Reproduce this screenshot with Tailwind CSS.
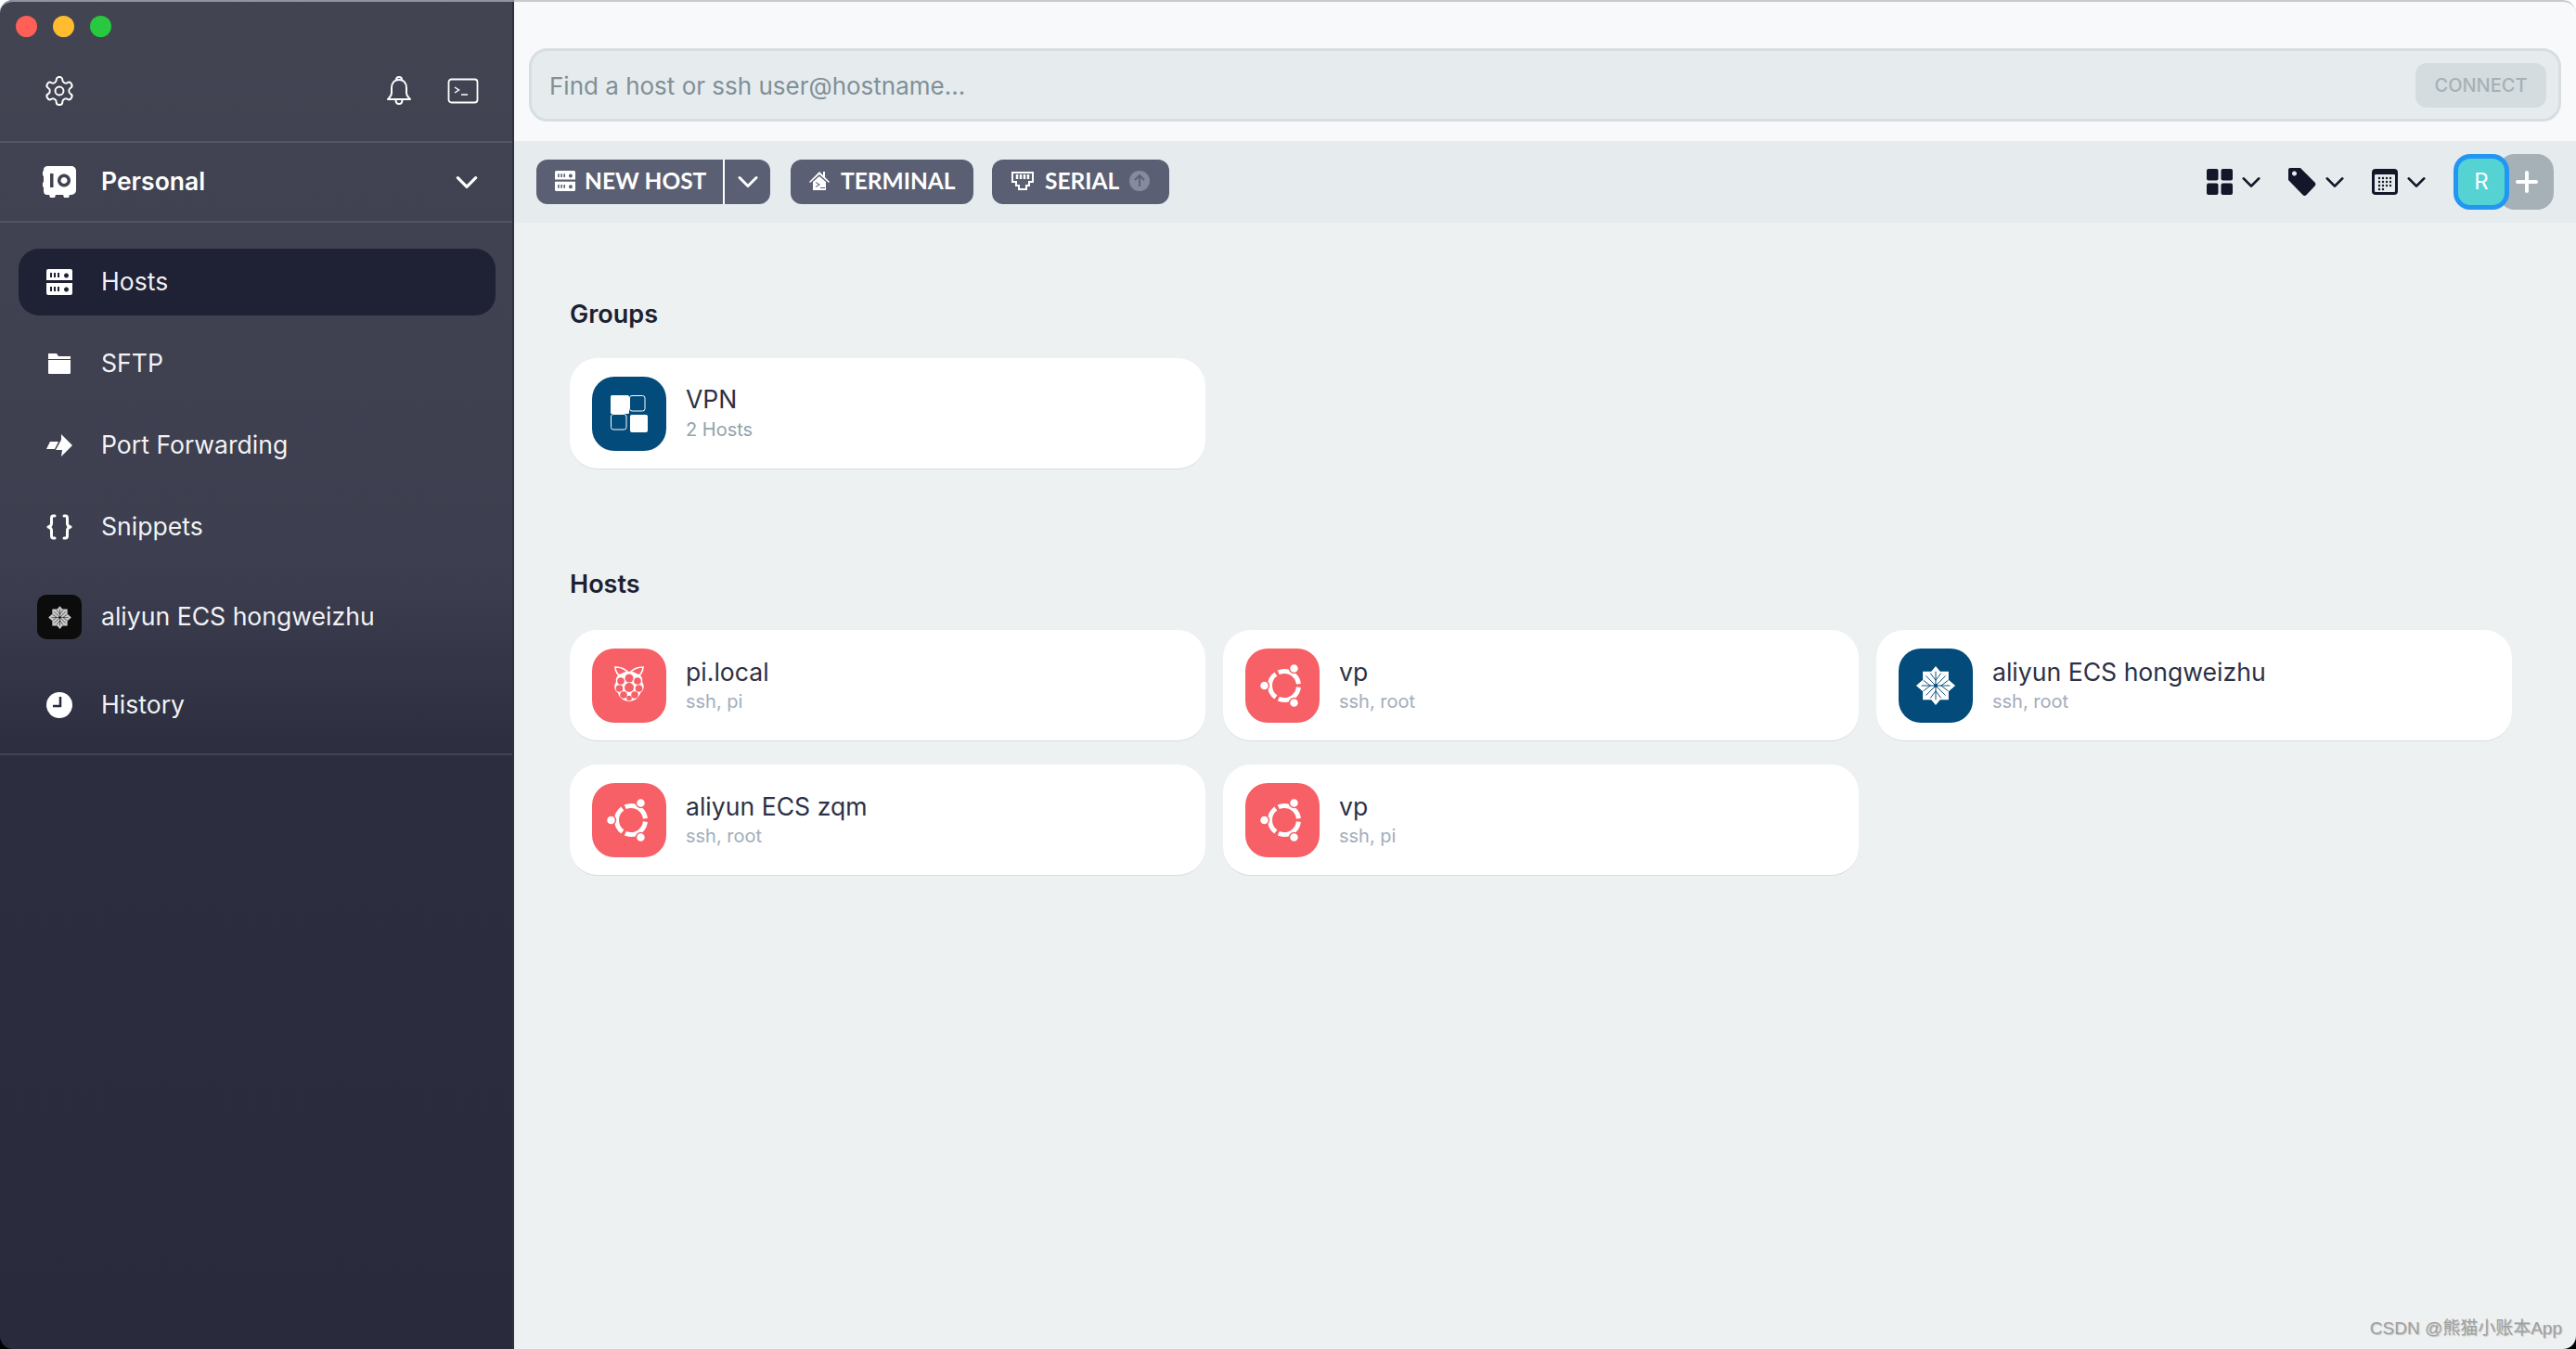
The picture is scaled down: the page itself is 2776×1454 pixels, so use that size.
<!DOCTYPE html>
<html><head><meta charset="utf-8">
<script src="https://cdn.jsdelivr.net/npm/@tailwindcss/browser@4"></script>
</head>
<body class="bg-[linear-gradient(#fff_50%,#000_50%)] h-[1454px]">
<svg class="hidden" width="0" height="0">
<symbol id="server" viewBox="0 0 28 28"><path fill="currentColor" fill-rule="evenodd" d="M2 0h24a2 2 0 0 1 2 2v10H0V2a2 2 0 0 1 2-2zM0 15h28v11a2 2 0 0 1-2 2H2a2 2 0 0 1-2-2zM4 4v5h2V4zm4 0v5h2V4zm4 0v5h2V4zm9.500 .5a2.500 2.500 0 1 0 .01 0zM4 19v5h2v-5zm4 0v5h2v-5zm4 0v5h2v-5zm9.500 .5a2.500 2.500 0 1 0 .01 0z"/></symbol>
<symbol id="chev" viewBox="0 0 22 14"><path d="M2 2.500l9 9 9-9" fill="none" stroke="currentColor" stroke-width="3" stroke-linecap="round" stroke-linejoin="round"/></symbol>
<symbol id="ubuntu" viewBox="0 0 80 80"><rect width="80" height="80" rx="24" fill="#f66066"/><circle cx="42" cy="40" r="15.500" fill="none" stroke="#fff" stroke-width="5" pathLength="100" stroke-dasharray="29.800 3.500" stroke-dashoffset="-1.750"/><g fill="#fff" stroke="#f66066" stroke-width="1.500"><circle cx="52.500" cy="21.500" r="5"/><circle cx="52.500" cy="58.500" r="5"/><circle cx="20.500" cy="40" r="5"/></g></symbol>
<symbol id="centos" viewBox="0 0 48 48" ><path fill="currentColor" d="M24 2l5 6h9.500v9.500L46 24l-7.500 6.500V40H29l-5 6-5-6H9.500v-9.500L2 24l7.500-6.500V8H19z"/><g fill="none" stroke="var(--ln)" stroke-width="1"><path d="M24 8v32M8 24h32M13 13l22 22M35 13L13 35M10 18l8 6-8 6M38 18l-8 6 8 6M18 10l6 8 6-8M18 38l6-8 6 8"/></g><circle cx="24" cy="24" r="2" fill="var(--ln)"/></symbol>
</svg>

<div class="w-[2776px] h-[1454px] flex overflow-hidden rounded-[14px] relative font-['Inter','Noto_Sans',sans-serif]">
  <aside class="w-[554px] shrink-0 flex flex-col text-white bg-[linear-gradient(180deg,#424452_0%,#3d3f50_42%,#2c2e40_56%,#292b3d_100%)] border-r-2 border-[#2f3140]">
    <div class="h-[154px] shrink-0 border-b-2 border-white/10 flex flex-col">
      <div class="flex gap-[17px] pl-[17px] pt-[17px]">
        <span class="w-[23px] h-[23px] rounded-full bg-[#fe5f57]"></span>
        <span class="w-[23px] h-[23px] rounded-full bg-[#febc2e]"></span>
        <span class="w-[23px] h-[23px] rounded-full bg-[#28c840]"></span>
      </div>
      <div class="flex items-center pl-[46px] pr-[36px] mt-[40px]">
        <svg class="w-[36px] h-[36px]" viewBox="0 0 24 24" fill="none" stroke="currentColor" stroke-width="1.300" stroke-linecap="round" stroke-linejoin="round"><path d="M12.220 2h-.44a2 2 0 0 0-2 2v.18a2 2 0 0 1-1 1.730l-.43.250a2 2 0 0 1-2 0l-.15-.080a2 2 0 0 0-2.730.730l-.22.380a2 2 0 0 0 .730 2.730l.15.100a2 2 0 0 1 1 1.720v.510a2 2 0 0 1-1 1.740l-.15.090a2 2 0 0 0-.730 2.730l.22.380a2 2 0 0 0 2.730.730l.15-.080a2 2 0 0 1 2 0l.43.250a2 2 0 0 1 1 1.730V20a2 2 0 0 0 2 2h.44a2 2 0 0 0 2-2v-.18a2 2 0 0 1 1-1.730l.43-.250a2 2 0 0 1 2 0l.15.080a2 2 0 0 0 2.730-.730l.22-.390a2 2 0 0 0-.730-2.730l-.15-.080a2 2 0 0 1-1-1.740v-.500a2 2 0 0 1 1-1.740l.15-.090a2 2 0 0 0 .730-2.730l-.22-.380a2 2 0 0 0-2.730-.730l-.15.080a2 2 0 0 1-2 0l-.43-.250a2 2 0 0 1-1-1.730V4a2 2 0 0 0-2-2z"/><circle cx="12" cy="12" r="3"/></svg>
        <svg class="ml-auto w-[28px] h-[34px]" viewBox="0 0 28 34" fill="none" stroke="currentColor" stroke-width="2" stroke-linejoin="round"><path d="M14 5c-5.500 0-8 4-8 9v5c0 3-2 5-4 7h24c-2-2-4-4-4-7v-5c0-5-2.500-9-8-9z"/><path d="M11 5c0-4 6-4 6 0M10.500 26.500c0 6 7 6 7 0"/></svg>
        <svg class="ml-[38px] w-[34px] h-[28px]" viewBox="0 0 34 28" fill="none" stroke="currentColor" stroke-width="1.800"><rect x="1.500" y="1.500" width="31" height="25" rx="3"/><path d="M8 10l4.500 3L8 16" stroke-width="1.500"/><path d="M15 18h7" stroke-width="1.500"/></svg>
      </div>
    </div>
    <div class="h-[86px] shrink-0 border-b-2 border-white/10 flex items-center pl-[46px] pr-[37px]">
      <svg class="w-[36px] h-[34px]" viewBox="0 0 36 34"><path fill="#fff" fill-rule="evenodd" d="M5 0h26a5 5 0 0 1 5 5v21a5 5 0 0 1-5 5h-2l-1 3h-5l-1-3H14l-1 3H8l-1-3H5a4 4 0 0 1-4-4v-4l-1-1v-4l1-1v-6L0 10V6l1-1a4 4 0 0 1 4-5zM8 8v15h3.500V8zm15 .5a7 7 0 1 0 .01 0zm0 3.500a3.500 3.500 0 1 1-.01 0z"/></svg>
      <span class="ml-[27px] text-[26.500px] font-semibold">Personal</span>
      <svg class="ml-auto w-[24px] h-[15px]"><use href="#chev"/></svg>
    </div>
    <nav class="flex flex-col pl-[20px] pr-[18px] pt-[28px] border-b-2 border-white/10 h-[574px] shrink-0 text-[26.600px] text-white/95">
      <a class="h-[72px] shrink-0 rounded-[22px] bg-[#1f2135] flex items-center pl-[30px] gap-[31px] mb-[8px]"><svg class="w-[28px] h-[28px] text-white"><use href="#server"/></svg>Hosts</a>
      <a class="h-[88px] shrink-0 flex items-center pl-[30px] gap-[31px]"><svg class="w-[28px] h-[28px]" viewBox="0 0 28 28" fill="#fff"><path d="M2 3h9l2 3h13v3H2zM2 10h24v14a1 1 0 0 1-1 1H3a1 1 0 0 1-1-1z"/></svg>SFTP</a>
      <a class="h-[88px] shrink-0 flex items-center pl-[30px] gap-[31px]"><svg class="w-[28px] h-[28px]" viewBox="0 0 28 28" fill="#fff"><path d="M16 2l12 12-12 12 1-7h-7l6-11zM4 10h9l-4 8H0z"/></svg>Port Forwarding</a>
      <a class="h-[88px] shrink-0 flex items-center pl-[30px] gap-[31px]"><svg class="w-[28px] h-[28px]" viewBox="0 0 28 28" fill="none" stroke="#fff" stroke-width="3" stroke-linecap="round" stroke-linejoin="round"><path d="M9 2H7.500C6 2 5.500 3 5.500 4.500V10c0 2-1 3.500-3.500 4 2.500.5 3.500 2 3.500 4v5.500C5.500 25 6 26 7.500 26H9M19 2h1.500C22 2 22.500 3 22.500 4.500V10c0 2 1 3.500 3.500 4-2.500.5-3.500 2-3.500 4v5.500c0 1.500-.5 2.500-2 2.500H19"/></svg>Snippets</a>
      <a class="h-[106px] shrink-0 flex items-center pl-[20px] gap-[21px]"><span class="w-[48px] h-[48px] rounded-[10px] bg-[#0c0c0c] flex items-center justify-center [--ln:#0c0c0c]"><svg class="w-[27px] h-[27px] text-[#c8c8c8]"><use href="#centos"/></svg></span>aliyun ECS hongweizhu</a>
      <a class="h-[84px] shrink-0 flex items-center pl-[30px] gap-[31px]"><svg class="w-[28px] h-[28px]" viewBox="0 0 28 28"><circle cx="14" cy="14" r="14" fill="#fff"/><path d="M15 5v10H7" fill="none" stroke="#292b3d" stroke-width="2.500"/></svg>History</a>
    </nav>
  </aside>

  <main class="flex-1 flex flex-col bg-[#edf1f2] text-[#2d3145]">
    <div class="h-[152px] shrink-0 bg-[#f8f9fb] pt-[52px] pl-[16px] pr-[16px]">
      <div class="h-[79px] rounded-[20px] border-[3px] border-[#d7dee2] bg-[#e6ebee] flex items-center pl-[19px] pr-[13px]">
        <span class="text-[26px] text-[#7f9097] pt-[1px]">Find a host or ssh user@hostname...</span>
        <span class="ml-auto w-[141px] h-[48px] rounded-[12px] bg-[#d5dcdf] text-[#a5b1b7] text-[20px] font-medium flex items-center justify-center">CONNECT</span>
      </div>
    </div>
    <div class="h-[88px] shrink-0 bg-[#e6ebee] flex items-center pl-[24px] pr-[24px] text-white text-[24.500px] font-bold font-['Lato',sans-serif]">
      <div class="h-[48px] w-[252px] rounded-[12px] bg-[#5b5f73] flex overflow-hidden">
        <div class="flex-1 flex items-center pl-[20px] pb-[2px] gap-[10px] border-r-2 border-white"><svg class="w-[22px] h-[22px]"><use href="#server"/></svg>NEW HOST</div>
        <div class="w-[49px] flex items-center justify-center"><svg class="w-[22px] h-[14px]"><use href="#chev"/></svg></div>
      </div>
      <div class="ml-[22px] h-[48px] w-[197px] rounded-[12px] bg-[#5b5f73] flex items-center pl-[20px] pb-[2px] gap-[12px]">
        <svg class="w-[22px] h-[22px]" viewBox="0 0 22 22" fill="#fff"><path d="M11 1l4 4V1h2v6l5 5-1 1-10-9L1 13l-1-1zM11 6l7 6v9H4v-9zM7 12v1l3 2-3 2v1l5-3zM12 18v1h5v-1z" fill-rule="evenodd"/></svg>TERMINAL
      </div>
      <div class="ml-[20px] h-[48px] w-[191px] rounded-[12px] bg-[#5b5f73] flex items-center pl-[20px] pb-[2px] gap-[11px]">
        <svg class="w-[26px] h-[22px]" viewBox="0 0 26 22" fill="none" stroke="#fff" stroke-width="2"><path d="M2 2h22v10h-4v4h-3v4H9v-4H6v-4H2z"/><path d="M7 4v5M11 4v5M15 4v5M19 4v5" stroke-width="2.500"/></svg>SERIAL
        <span class="w-[22px] h-[22px] rounded-full bg-[#858a9e] flex items-center justify-center"><svg class="w-[14px] h-[14px]" viewBox="0 0 14 14" fill="none" stroke="#5b5f73" stroke-width="1.800"><path d="M7 13V1M2 6l5-5 5 5"/></svg></span>
      </div>
      <div class="ml-auto flex items-center text-[#131729]">
        <svg class="w-[28px] h-[28px]" viewBox="0 0 28 28" fill="currentColor"><rect width="12.500" height="12.500" rx="2"/><rect x="15.500" width="12.500" height="12.500" rx="2"/><rect y="15.500" width="12.500" height="12.500" rx="2"/><rect x="15.500" y="15.500" width="12.500" height="12.500" rx="2"/></svg>
        <svg class="ml-[10px] w-[20px] h-[13px]"><use href="#chev"/></svg>
        <svg class="ml-[30px] w-[30px] h-[30px]" viewBox="0 0 30 30" fill="currentColor"><path fill-rule="evenodd" d="M2 0h11l15.500 15.500a3 3 0 0 1 0 4L19.500 29a3 3 0 0 1-4 0L0 13V2a2 2 0 0 1 2-2zm4.500 3.500a2.500 2.500 0 1 0 .01 0z"/></svg>
        <svg class="ml-[10px] w-[20px] h-[13px]"><use href="#chev"/></svg>
        <svg class="ml-[30px] w-[28px] h-[28px]" viewBox="0 0 28 28"><rect width="28" height="28" rx="4" fill="currentColor"/><rect x="3" y="6" width="22" height="19" rx="1" fill="#e6ebee"/><g fill="#131729"><circle cx="8" cy="10" r="1.200"/><circle cx="12" cy="10" r="1.200"/><circle cx="16" cy="10" r="1.200"/><circle cx="20" cy="10" r="1.200"/><circle cx="8" cy="14" r="1.200"/><circle cx="12" cy="14" r="1.200"/><circle cx="16" cy="14" r="1.200"/><circle cx="20" cy="14" r="1.200"/><circle cx="8" cy="18" r="1.200"/><circle cx="12" cy="18" r="1.200"/><circle cx="16" cy="18" r="1.200"/><circle cx="20" cy="18" r="1.200"/><circle cx="8" cy="22" r="1.200"/><circle cx="12" cy="22" r="1.200"/></g></svg>
        <svg class="ml-[10px] w-[20px] h-[13px]"><use href="#chev"/></svg>
        <div class="ml-[30px] flex items-center">
          <span class="relative z-10 w-[60px] h-[60px] rounded-[18px] border-[5px] border-[#2196f3] bg-[#55d3d3] text-white text-[24px] font-normal font-['Inter',sans-serif] flex items-center justify-center">R</span>
          <span class="w-[60px] h-[60px] -ml-[12px] pl-[12px] rounded-[18px] bg-[#a5b1b7] flex items-center justify-center"><svg class="-ml-[11px] w-[24px] h-[24px]" viewBox="0 0 24 24" stroke="#fff" stroke-width="4" stroke-linecap="round"><path d="M12 2v20M2 12h20"/></svg></span>
        </div>
      </div>
    </div>

    <div class="pl-[60px] pt-[82px] w-[2153px]">
      <h2 class="text-[27px] font-semibold text-[#1c2030] leading-[33px]">Groups</h2>
      <div class="mt-[31px] grid grid-cols-3 gap-x-[19px] gap-y-[26px]">
        <div class="h-[120px] rounded-[30px] bg-white border-b border-[#d5dde1] flex items-center pl-[24px] gap-[21px]">
          <svg class="w-[80px] h-[80px] shrink-0" viewBox="0 0 80 80"><rect width="80" height="80" rx="24" fill="#024b7a"/><rect x="20" y="20" width="20" height="20" rx="1.500" fill="#fff"/><rect x="40.500" y="20.500" width="16.500" height="16.500" rx="2.500" fill="#024b7a" stroke="#fff"/><rect x="20.500" y="40.500" width="16.500" height="16.500" rx="2.500" fill="#024b7a" stroke="#fff"/><rect x="41" y="41" width="19" height="19" rx="2" fill="#fff"/></svg>
          <div><div class="text-[26.600px] leading-[34px]">VPN</div><div class="text-[20px] leading-[32px] text-[#94a3ac]">2 Hosts</div></div>
        </div>
      </div>
      <h2 class="mt-[108px] text-[27px] font-semibold text-[#1c2030] leading-[32px]">Hosts</h2>
      <div class="mt-[33px] grid grid-cols-3 gap-x-[19px] gap-y-[25px]">
        <div class="h-[120px] rounded-[30px] bg-white border-b border-[#d5dde1] flex items-center pl-[24px] gap-[21px]">
          <svg class="w-[80px] h-[80px] shrink-0" viewBox="0 0 80 80"><rect width="80" height="80" rx="24" fill="#f66066"/><g fill="none" stroke="#fff" stroke-width="1.600"><path d="M39 26c-4-5-10-6-14-6 0 5 3 10 9 11M41 26c4-5 9-6 14-6 0 5-3 10-9 11"/></g><path fill="#fff" d="M32 27c4-3 12-3 16 0 5 1 7 5 6 9 3 4 2 9-2 12-1 5-7 9-12 9s-11-4-12-9c-4-3-5-8-2-12-1-4 1-8 6-9z"/><g fill="#f66066"><circle cx="40" cy="32" r="4.500"/><circle cx="31" cy="35" r="3.800"/><circle cx="49" cy="35" r="3.800"/><circle cx="40" cy="42" r="5"/><circle cx="29.500" cy="43" r="3.800"/><circle cx="50.500" cy="43" r="3.800"/><circle cx="34" cy="50" r="3.800"/><circle cx="46" cy="50" r="3.800"/><circle cx="40" cy="53.500" r="2.800"/></g></svg>
          <div><div class="text-[26.600px] leading-[34px]">pi.local</div><div class="text-[20px] leading-[30px] text-[#a3adbb]">ssh, pi</div></div>
        </div>
        <div class="h-[120px] rounded-[30px] bg-white border-b border-[#d5dde1] flex items-center pl-[24px] gap-[21px]">
          <svg class="w-[80px] h-[80px] shrink-0"><use href="#ubuntu"/></svg>
          <div><div class="text-[26.600px] leading-[34px]">vp</div><div class="text-[20px] leading-[30px] text-[#a3adbb]">ssh, root</div></div>
        </div>
        <div class="h-[120px] rounded-[30px] bg-white border-b border-[#d5dde1] flex items-center pl-[24px] gap-[21px]">
          <span class="w-[80px] h-[80px] shrink-0 rounded-[24px] bg-[#024b7a] flex items-center justify-center text-white [--ln:#024b7a]"><svg class="w-[46px] h-[46px]"><use href="#centos"/></svg></span>
          <div><div class="text-[26.600px] leading-[34px]">aliyun ECS hongweizhu</div><div class="text-[20px] leading-[30px] text-[#a3adbb]">ssh, root</div></div>
        </div>
        <div class="h-[120px] rounded-[30px] bg-white border-b border-[#d5dde1] flex items-center pl-[24px] gap-[21px]">
          <svg class="w-[80px] h-[80px] shrink-0"><use href="#ubuntu"/></svg>
          <div><div class="text-[26.600px] leading-[34px]">aliyun ECS zqm</div><div class="text-[20px] leading-[30px] text-[#a3adbb]">ssh, root</div></div>
        </div>
        <div class="h-[120px] rounded-[30px] bg-white border-b border-[#d5dde1] flex items-center pl-[24px] gap-[21px]">
          <svg class="w-[80px] h-[80px] shrink-0"><use href="#ubuntu"/></svg>
          <div><div class="text-[26.600px] leading-[34px]">vp</div><div class="text-[20px] leading-[30px] text-[#a3adbb]">ssh, pi</div></div>
        </div>
      </div>
    </div>
  </main>
  <div class="absolute right-[15px] bottom-[8px] text-[19px] text-[#a0a0a0] font-['Liberation_Sans','Noto_Sans_CJK_SC',sans-serif] [text-shadow:1px_1px_1px_#0003]">CSDN @熊猫小账本App</div>
  <div class="absolute inset-0 rounded-[14px] border-t-2 border-[#b4b6bc]/70 pointer-events-none"></div>
</div>
</body></html>
